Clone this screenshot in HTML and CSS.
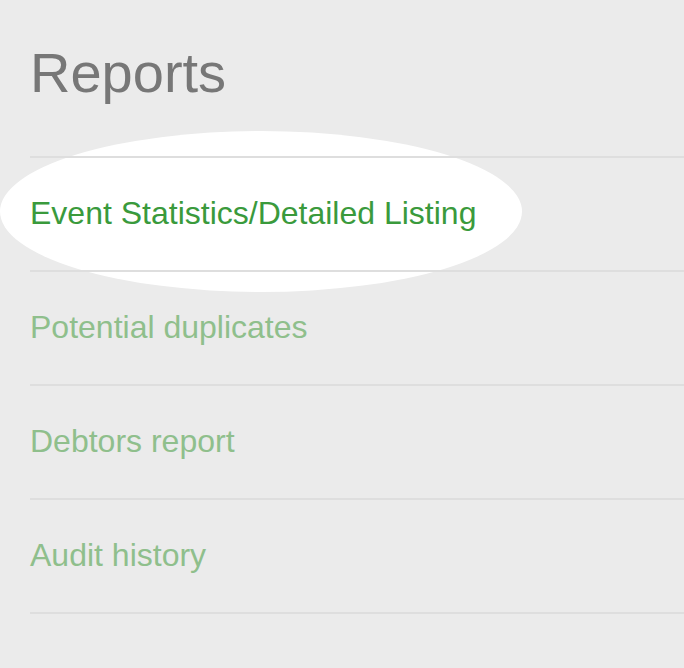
FILE: index.html
```html
<!DOCTYPE html>
<html lang="en">
<head>
    <meta charset="UTF-8">
    <meta name="viewport" content="width=device-width, initial-scale=1.0">
    <title>Reports</title>
    <link rel="stylesheet" href="styles.css">
</head>
<body>
    <div class="page">
        <div class="highlight"></div>
        <h1 class="title">Reports</h1>
        <ul class="report-list">
            <li><a class="active" href="#">Event Statistics/Detailed Listing</a></li>
            <li><a href="#">Potential duplicates</a></li>
            <li><a href="#">Debtors report</a></li>
            <li><a href="#">Audit history</a></li>
        </ul>
    </div>
</body>
</html>
```

FILE: styles.css
```css
body {
    margin: 0;
    background-color: #ebebeb;
    font-family: "Liberation Sans", Arial, sans-serif;
}
.page {
    position: relative;
    padding-left: 30px;
    height: 668px;
    overflow: hidden;
}
.highlight {
    position: absolute;
    left: 0;
    top: 131px;
    width: 522px;
    height: 161px;
    border-radius: 50%;
    background-color: #fff;
}
.title {
    margin: 45px 0 55px;
    font-size: 56px;
    line-height: 1;
    font-weight: normal;
    color: #777;
}
.report-list {
    position: relative;
    list-style: none;
    margin: 0;
    padding: 0;
}
.report-list li {
    border-top: 2px solid #dedede;
    padding: 39px 0 41px;
}
.report-list li:last-child {
    border-bottom: 2px solid #dedede;
}
.report-list a {
    display: block;
    font-size: 32px;
    line-height: 1;
    color: #8fbf8c;
    text-decoration: none;
}
.report-list a.active {
    color: #3a9a3c;
}
```
